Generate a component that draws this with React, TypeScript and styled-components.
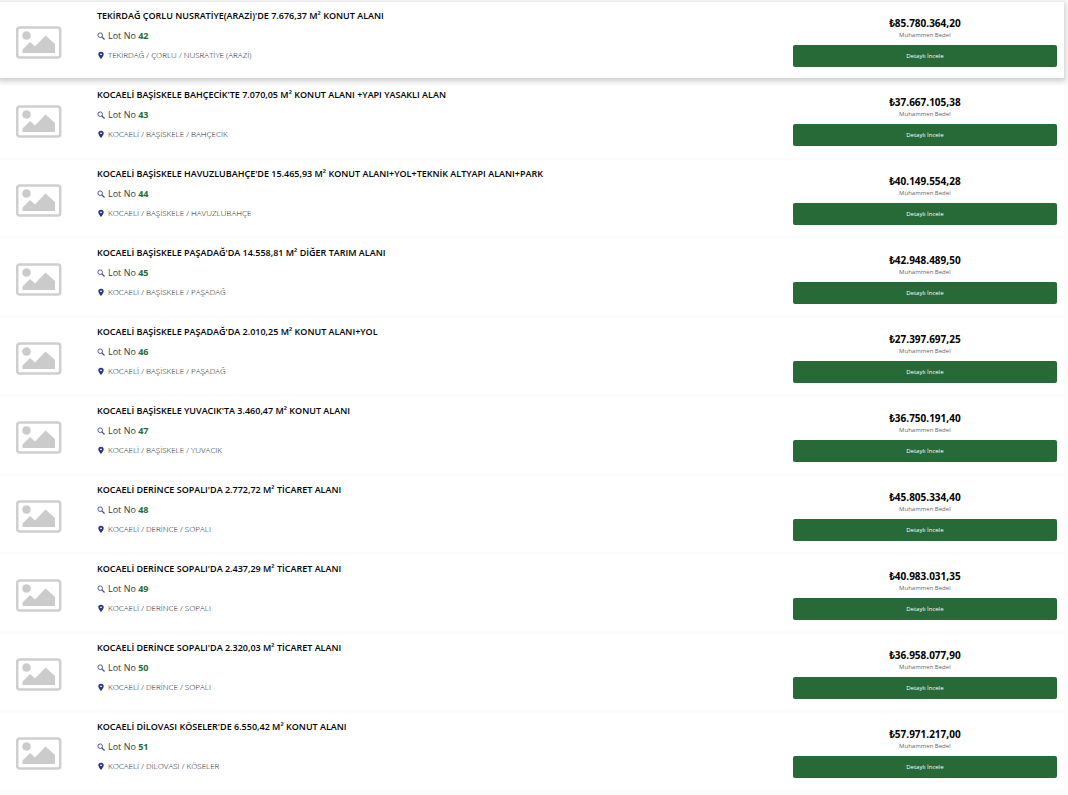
import React from "react";
import styled, { createGlobalStyle } from "styled-components";

const GlobalStyle = createGlobalStyle`
  * { box-sizing: border-box; }
  body {
    margin: 0;
    background: #fcfcfc;
    color: #000;
    font-family: "Open Sans", "Noto Sans", sans-serif;
    overflow-x: hidden;
  }
`;

const List = styled.ul`
  list-style: none;
  margin: 0;
  padding: 2px 4px 0 0;
  display: flex;
  flex-direction: column;
  gap: 3px;
`;

const Card = styled.li<{ $raised: boolean }>`
  display: grid;
  grid-template-columns: 97px minmax(0, 1fr) 25%;
  align-items: start;
  height: 76px;
  padding-right: 7px;
  background: #fff;
  position: relative;
  z-index: ${(p) => (p.$raised ? 1 : 0)};
  box-shadow: ${(p) => (p.$raised ? "0 2px 5px 2px rgba(0, 0, 0, 0.16)" : "none")};
`;

const Thumb = styled.svg`
  display: block;
  width: 46px;
  height: 33px;
  margin: 24px 0 0 16px;
`;

const Info = styled.div`
  display: flex;
  flex-direction: column;
  gap: 7px;
  padding-top: 8px;
`;

const Title = styled.h2`
  margin: 0 0 1px;
  font-size: 9px;
  line-height: 12px;
  font-weight: 600;
  color: #000;
  white-space: nowrap;
`;

const Meta = styled.p<{ $small?: boolean }>`
  margin: 0;
  display: flex;
  align-items: center;
  gap: 3px;
  font-size: ${(p) => (p.$small ? "8px" : "9px")};
  line-height: 12px;
  font-weight: ${(p) => (p.$small ? 350 : 400)};
  color: ${(p) => (p.$small ? "#0c1522" : "#333a44")};
  white-space: nowrap;

  svg {
    flex: none;
    width: 8px;
    height: 8px;
  }
`;

const LotNumber = styled.strong`
  color: #276b38;
  font-weight: 700;
`;

const Offer = styled.div`
  display: flex;
  flex-direction: column;
  align-items: stretch;
  padding-top: 14px;
  text-align: center;
`;

const Price = styled.strong`
  font-size: 10px;
  line-height: 14px;
  font-weight: 700;
  color: #000;
`;

const Caption = styled.span`
  font-size: 6px;
  line-height: 10px;
  color: #666;
`;

const DetailButton = styled.button`
  height: 22px;
  margin-top: 5px;
  padding: 0;
  border: 0;
  border-radius: 2px;
  background: #276937;
  color: #fff;
  font-family: inherit;
  font-size: 6px;
  line-height: 10px;
  font-weight: 500;
  cursor: pointer;
`;

const PictureIcon = () => (
  <Thumb viewBox="0 0 46 33" aria-hidden="true">
    <rect x="1.2" y="1.5" width="43" height="30" rx="2.5" fill="#fff" stroke="#cfcfcf" strokeWidth="2.6" />
    <circle cx="10.5" cy="9.5" r="4.3" fill="#cbcbcb" />
    <path d="M6.5 27V23.500l7.5-7.500 5 4.500L29.500 9.500 39 18v9z" fill="#cbcbcb" />
  </Thumb>
);

const SearchIcon = () => (
  <svg viewBox="0 0 8 8" fill="none" stroke="#3f4b8c" aria-hidden="true">
    <circle cx="3.200" cy="3.200" r="2.300" strokeWidth="0.900" />
    <path d="M4.900 4.900 7.500 7.500" strokeWidth="1.200" />
  </svg>
);

const PinIcon = () => (
  <svg viewBox="0 0 8 8" aria-hidden="true">
    <path
      d="M4 .8a2.700 2.500 0 0 0-2.700 2.500C1.300 5.100 4 8 4 8s2.700-2.900 2.700-4.700A2.700 2.500 0 0 0 4 .8zm0 1.600a.9.9 0 1 1 0 1.800.9.9 0 0 1 0-1.800z"
      fill="#27357f"
      fillRule="evenodd"
    />
  </svg>
);

interface Lot {
  no: number;
  title: string;
  place: string;
  price: string;
}

const lots: Lot[] = [
  { no: 42, title: "TEKİRDAĞ ÇORLU NUSRATİYE(ARAZİ)'DE 7.676,37 M² KONUT ALANI", place: "TEKİRDAĞ / ÇORLU / NUSRATİYE (ARAZİ)", price: "₺85.780.364,20" },
  { no: 43, title: "KOCAELİ BAŞİSKELE BAHÇECİK'TE 7.070,05 M² KONUT ALANI +YAPI YASAKLI ALAN", place: "KOCAELİ / BAŞİSKELE / BAHÇECİK", price: "₺37.667.105,38" },
  { no: 44, title: "KOCAELİ BAŞİSKELE HAVUZLUBAHÇE'DE 15.465,93 M² KONUT ALANI+YOL+TEKNİK ALTYAPI ALANI+PARK", place: "KOCAELİ / BAŞİSKELE / HAVUZLUBAHÇE", price: "₺40.149.554,28" },
  { no: 45, title: "KOCAELİ BAŞİSKELE PAŞADAĞ'DA 14.558,81 M² DİĞER TARIM ALANI", place: "KOCAELİ / BAŞİSKELE / PAŞADAĞ", price: "₺42.948.489,50" },
  { no: 46, title: "KOCAELİ BAŞİSKELE PAŞADAĞ'DA 2.010,25 M² KONUT ALANI+YOL", place: "KOCAELİ / BAŞİSKELE / PAŞADAĞ", price: "₺27.397.697,25" },
  { no: 47, title: "KOCAELİ BAŞİSKELE YUVACIK'TA 3.460,47 M² KONUT ALANI", place: "KOCAELİ / BAŞİSKELE / YUVACIK", price: "₺36.750.191,40" },
  { no: 48, title: "KOCAELİ DERİNCE SOPALI'DA 2.772,72 M² TİCARET ALANI", place: "KOCAELİ / DERİNCE / SOPALI", price: "₺45.805.334,40" },
  { no: 49, title: "KOCAELİ DERİNCE SOPALI'DA 2.437,29 M² TİCARET ALANI", place: "KOCAELİ / DERİNCE / SOPALI", price: "₺40.983.031,35" },
  { no: 50, title: "KOCAELİ DERİNCE SOPALI'DA 2.320,03 M² TİCARET ALANI", place: "KOCAELİ / DERİNCE / SOPALI", price: "₺36.958.077,90" },
  { no: 51, title: "KOCAELİ DİLOVASI KÖSELER'DE 6.550,42 M² KONUT ALANI", place: "KOCAELİ / DİLOVASI / KÖSELER", price: "₺57.971.217,00" },
];

const App: React.FC = () => (
  <>
    <GlobalStyle />
    <List>
      {lots.map((lot, index) => (
        <Card key={lot.no} $raised={index === 0}>
          <PictureIcon />
          <Info>
            <Title>{lot.title}</Title>
            <Meta>
              <SearchIcon />
              <span>
                Lot No <LotNumber>{lot.no}</LotNumber>
              </span>
            </Meta>
            <Meta $small>
              <PinIcon />
              <span>{lot.place}</span>
            </Meta>
          </Info>
          <Offer>
            <Price>{lot.price}</Price>
            <Caption>Muhammen Bedel</Caption>
            <DetailButton type="button">Detaylı İncele</DetailButton>
          </Offer>
        </Card>
      ))}
    </List>
  </>
);

export default App;
